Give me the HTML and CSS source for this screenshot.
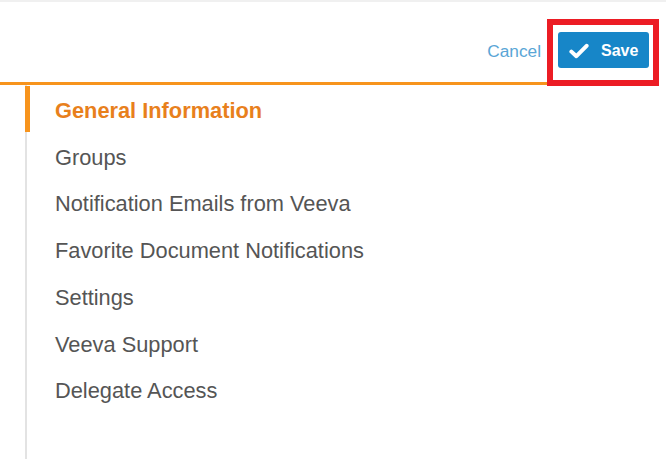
FILE: index.html
```html
<!DOCTYPE html>
<html>
<head>
<meta charset="utf-8">
<link rel="stylesheet" href="styles.css">
</head>
<body>
<div class="page">
  <header class="header">
    <div class="actions">
      <a class="cancel">Cancel</a>
      <div class="save-wrap">
        <button class="save">
          <svg class="check" viewBox="0 0 20 16" width="20" height="16"><path d="M2.4 8.6 L7.4 13.2 L17.6 2.8" fill="none" stroke="#fff" stroke-width="4" stroke-linecap="round" stroke-linejoin="round"/></svg>
          <span>Save</span>
        </button>
        <div class="highlight"></div>
      </div>
    </div>
  </header>
  <div class="rule"></div>
  <nav class="menu">
    <div class="item active">General Information</div>
    <div class="item">Groups</div>
    <div class="item">Notification Emails from Veeva</div>
    <div class="item">Favorite Document Notifications</div>
    <div class="item">Settings</div>
    <div class="item">Veeva Support</div>
    <div class="item">Delegate Access</div>
  </nav>
</div>
</body>
</html>
```
FILE: styles.css
```css
html, body {
  margin: 0;
  padding: 0;
  background: #fff;
}
body {
  font-family: "Liberation Sans", Arial, sans-serif;
  width: 666px;
  height: 459px;
  overflow: hidden;
}
.page {
  border-top: 2px solid #f0f0f0;
}
.header {
  height: 80px;
  display: flex;
  justify-content: flex-end;
  padding-right: 17px;
}
.actions {
  display: flex;
  align-items: center;
  gap: 17px;
  padding-top: 30px;
  height: 36px;
}
.cancel {
  color: #5aa6d6;
  font-size: 17.3px;
  cursor: pointer;
  padding-top: 2px;
}
.save-wrap {
  position: relative;
}
.save {
  display: flex;
  align-items: center;
  gap: 12px;
  width: 91px;
  height: 36px;
  padding: 2px 0 0 11px;
  border: none;
  border-radius: 3px;
  background: #1786c8;
  color: #fff;
  font-family: "Liberation Sans", Arial, sans-serif;
  font-size: 16px;
  font-weight: bold;
}
.check {
  display: block;
}
.highlight {
  position: absolute;
  left: -11px;
  top: -13px;
  width: 100px;
  height: 55px;
  border: 6px solid #ec1c24;
  pointer-events: none;
}
.rule {
  width: 649px;
  height: 3px;
  background: #f7941d;
}
.menu {
  margin-left: 25px;
  border-left: 2px solid #e3e3e3;
  height: 380px;
  padding-top: 9px;
  display: flex;
  flex-direction: column;
}
.item {
  font-size: 21.8px;
  color: #555;
  height: 46.8px;
  line-height: 38px;
  padding-left: 28px;
  margin-left: -2px;
  border-left: 2px solid transparent;
}
.item.active {
  color: #e8801c;
  font-weight: bold;
  border-left: 5px solid #f7941d;
  padding-left: 25px;
  height: 46px;
  margin-top: -8px;
  line-height: 49px;
  margin-bottom: 6.5px;
}
```
